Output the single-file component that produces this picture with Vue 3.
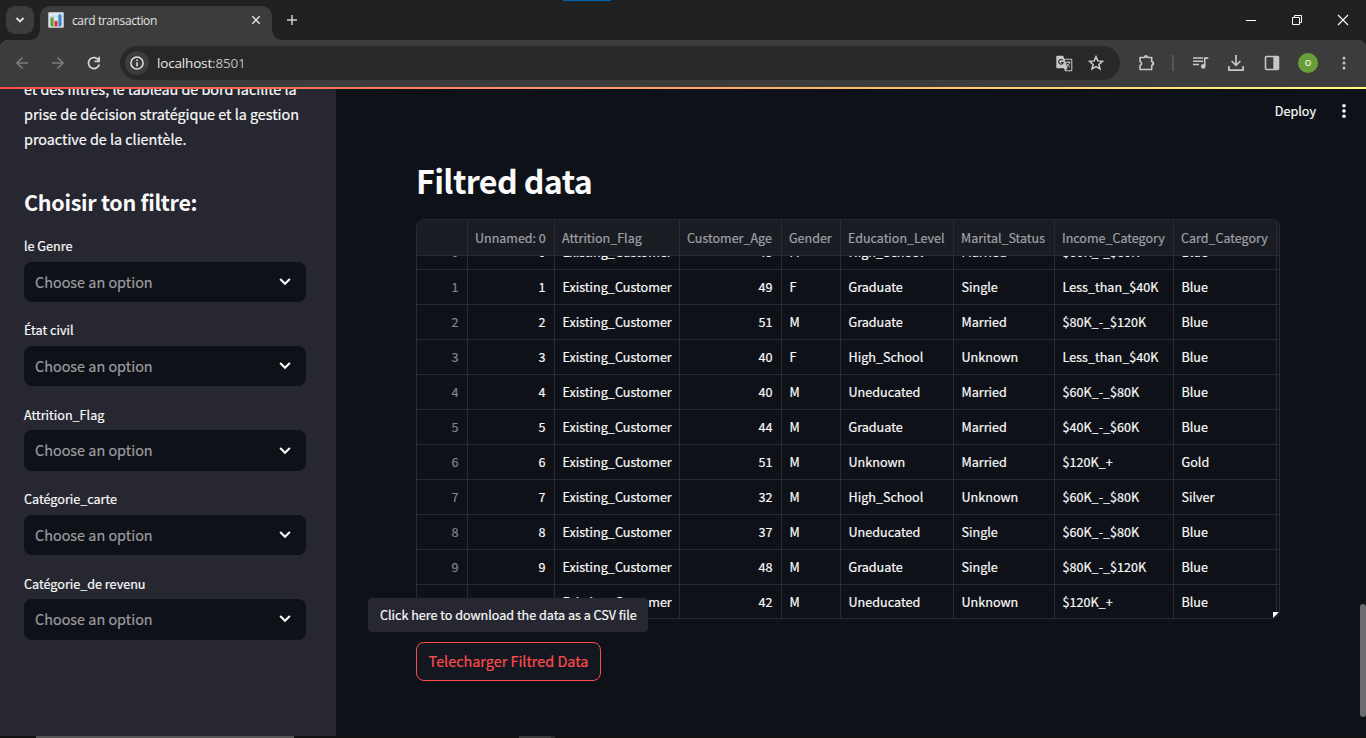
<script setup>
const filters = ['le Genre', 'État civil', 'Attrition_Flag', 'Catégorie_carte', 'Catégorie_de revenu']

const columns = [
  { name: '', num: true },
  { name: 'Unnamed: 0', num: true },
  { name: 'Attrition_Flag' },
  { name: 'Customer_Age', num: true },
  { name: 'Gender' },
  { name: 'Education_Level' },
  { name: 'Marital_Status' },
  { name: 'Income_Category' },
  { name: 'Card_Category' },
]

const customer = 'Existing_Customer'
const rows = [
  ['0', '0', customer, '45', 'M', 'High_School', 'Married', '$60K_-_$80K', 'Blue'],
  ['1', '1', customer, '49', 'F', 'Graduate', 'Single', 'Less_than_$40K', 'Blue'],
  ['2', '2', customer, '51', 'M', 'Graduate', 'Married', '$80K_-_$120K', 'Blue'],
  ['3', '3', customer, '40', 'F', 'High_School', 'Unknown', 'Less_than_$40K', 'Blue'],
  ['4', '4', customer, '40', 'M', 'Uneducated', 'Married', '$60K_-_$80K', 'Blue'],
  ['5', '5', customer, '44', 'M', 'Graduate', 'Married', '$40K_-_$60K', 'Blue'],
  ['6', '6', customer, '51', 'M', 'Unknown', 'Married', '$120K_+', 'Gold'],
  ['7', '7', customer, '32', 'M', 'High_School', 'Unknown', '$60K_-_$80K', 'Silver'],
  ['8', '8', customer, '37', 'M', 'Uneducated', 'Single', '$60K_-_$80K', 'Blue'],
  ['9', '9', customer, '48', 'M', 'Graduate', 'Single', '$80K_-_$120K', 'Blue'],
  ['10', '10', customer, '42', 'M', 'Uneducated', 'Unknown', '$120K_+', 'Blue'],
]
</script>

<template>
  <div class="window">
    <header class="titlebar">
      <button class="tab-search">
        <svg width="10" height="10" viewBox="0 0 10 10"><path d="M1.5 3 5 6.5 8.5 3" fill="none" stroke="#e3e3e3" stroke-width="1.8" /></svg>
      </button>
      <div class="tab">
        <svg class="favicon" width="16" height="16" viewBox="0 0 16 16">
          <rect x=".3" y=".3" width="15.4" height="15.4" rx="1" fill="#dfe9f0" />
          <path d="M1 4.5h14M1 8h14M1 11.500h14M5.500 1v14M10.500 1v14" stroke="#b7cddb" stroke-width=".6" />
          <rect x="2.500" y="5.500" width="3" height="9" fill="#5c9e31" />
          <rect x="6.500" y="9" width="3" height="5.500" fill="#dc2d45" />
          <rect x="10.500" y="2.500" width="3" height="12" fill="#3b88c3" />
        </svg>
        <span class="tab-title">card transaction</span>
        <svg class="tab-close" width="10" height="10" viewBox="0 0 10 10"><path d="m1.300 1.300 7.400 7.400m0-7.400-7.400 7.400" stroke="#e3e3e3" stroke-width="1.500" /></svg>
      </div>
      <svg class="new-tab" width="12" height="12" viewBox="0 0 12 12"><path d="M6 1v10M1 6h10" stroke="#d0d0d0" stroke-width="1.500" /></svg>
      <i class="snap"></i>
      <div class="controls">
        <svg width="46" height="40" viewBox="0 0 46 40"><path d="M18 20.500h10" stroke="#fff" /></svg>
        <svg width="46" height="40" viewBox="0 0 46 40"><path d="M18.500 17.500h7v7h-7zM20.500 17.500v-2h7v7h-2" fill="none" stroke="#fff" /></svg>
        <svg width="46" height="40" viewBox="0 0 46 40"><path d="m18 15 10 10m0-10L18 25" stroke="#fff" stroke-width="1.100" /></svg>
      </div>
    </header>

    <div class="toolbar">
      <svg class="nav" width="36" height="36" viewBox="0 0 36 36"><path d="M24 18H13m5.500-5.500L13 18l5.500 5.500" fill="none" stroke="#7c7c7c" stroke-width="1.600" /></svg>
      <svg class="nav" width="36" height="36" viewBox="0 0 36 36"><path d="M12 18h11m-5.500-5.500L23 18l-5.500 5.500" fill="none" stroke="#7c7c7c" stroke-width="1.600" /></svg>
      <svg class="nav" width="36" height="36" viewBox="0 0 36 36"><path d="M22.700 15.200a5.500 5.500 0 1 0 .6 4.300" fill="none" stroke="#d2d2d2" stroke-width="1.800" /><path d="M24 11.800v5.500h-5.500v-1.700h3.800v-3.800z" fill="#d2d2d2" /></svg>
      <div class="omnibox">
        <span class="site-info">
          <svg width="14" height="14" viewBox="0 0 14 14"><circle cx="7" cy="7" r="6.100" fill="none" stroke="#e3e3e3" stroke-width="1.500" /><path d="M7 6.300v4.200M7 3.500v1.600" stroke="#e3e3e3" stroke-width="1.500" /></svg>
        </span>
        <span class="url">localhost<span class="port">:8501</span></span>
        <svg class="translate" width="17" height="17" viewBox="0 0 17 17">
          <path d="M1.200.7h6l1 3h7.200q.9 0 .9.900v10.700q0 .9-.9.900H9l-1-3H1.200q-.9 0-.9-.9V1.600q0-.9.900-.9z" fill="#c7c7c7" />
          <path d="M8.700 4.700h6.600v10.500H9.700l1.900-2z" fill="#282828" />
          <path d="M6.800 5.400a2.300 2.300 0 1 0 .4 2.100H5" fill="none" stroke="#282828" stroke-width="1.100" />
          <path d="M9.200 7.200h5.500M12 6v1.200m1.900 0q-.7 2.600-3.700 4.800m.5-3.500q1 2.200 3.400 3.800" fill="none" stroke="#c7c7c7" stroke-width="1" />
        </svg>
        <svg class="star" width="16" height="16" viewBox="0 0 16 16"><path d="m8 1.700 1.800 4.200 4.700.4-3.600 3.100 1.100 4.600L8 11.600 4 14l1.100-4.600-3.600-3.100 4.700-.4z" fill="none" stroke="#cfcfcf" stroke-width="1.500" /></svg>
      </div>
      <svg class="puzzle" width="18" height="18" viewBox="0 0 18 18"><path d="M2 3.500h4.300a1.900 1.300 0 0 1 3.400 0h4v4.300a1.700 1.700 0 0 1 0 3.400v4.300H2v-3.900a2.200 2.200 0 0 0 0-4.200z" fill="none" stroke="#c7c7c7" stroke-width="1.600" stroke-linejoin="round" /><path d="M6 2.900a2 2 0 0 1 4 0zM14.200 7.500a2 2 0 0 1 0 4z" fill="#c7c7c7" /></svg>
      <i class="separator"></i>
      <svg class="media" width="17" height="16" viewBox="0 0 17 16"><path d="M1 3h10M1 6.200h10M1 9.400h6" stroke="#c7c7c7" stroke-width="1.500" /><path d="M12.700 11.200V3.100h3.600" fill="none" stroke="#c7c7c7" stroke-width="1.600" /><circle cx="11.200" cy="11.400" r="2.300" fill="#c7c7c7" /></svg>
      <svg class="download" width="16" height="16" viewBox="0 0 16 16"><path d="M8 0v10M3.600 6 8 10.400 12.400 6M.9 11v4.100h14.200V11" fill="none" stroke="#c7c7c7" stroke-width="1.700" /></svg>
      <svg class="panel" width="16" height="16" viewBox="0 0 16 16"><rect x="1.500" y="1.500" width="13" height="13" rx="1" fill="none" stroke="#c7c7c7" stroke-width="1.600" /><path d="M9.300 1.500h5.200v13H9.300z" fill="#c7c7c7" /></svg>
      <span class="avatar">o</span>
      <svg class="menu" width="4" height="16" viewBox="0 0 4 16"><circle cx="2" cy="3" r="1.500" fill="#c7c7c7" /><circle cx="2" cy="8" r="1.500" fill="#c7c7c7" /><circle cx="2" cy="13" r="1.500" fill="#c7c7c7" /></svg>
    </div>

    <div class="decoration"></div>

    <div class="page">
      <aside class="sidebar">
        <p class="intro">et des filtres, le tableau de bord facilite la<br />prise de décision stratégique et la gestion<br />proactive de la clientèle.</p>
        <h2>Choisir ton filtre:</h2>
        <div v-for="label in filters" :key="label" class="field">
          <label>{{ label }}</label>
          <div class="select">
            <span>Choose an option</span>
            <svg width="12" height="8" viewBox="0 0 12 8"><path d="M1.700 1.500 6 5.700l4.300-4.200" fill="none" stroke="#fafafa" stroke-width="2.100" stroke-linecap="round" /></svg>
          </div>
        </div>
      </aside>

      <main class="main">
        <nav class="actions">
          <span>Deploy</span>
          <svg width="4" height="16" viewBox="0 0 4 16"><circle cx="2" cy="2.700" r="1.800" fill="#fafafa" /><circle cx="2" cy="8" r="1.800" fill="#fafafa" /><circle cx="2" cy="13.300" r="1.800" fill="#fafafa" /></svg>
        </nav>
        <h1>Filtred data</h1>
        <div class="table">
          <div class="row head">
            <span v-for="c in columns" :key="c.name" class="cell">{{ c.name }}</span>
            <span></span>
          </div>
          <div class="body">
            <div v-for="row in rows" :key="row[0]" class="row">
              <span v-for="(value, i) in row" :key="i" class="cell" :class="{ num: columns[i].num, index: i === 0 }">{{ value }}</span>
              <span></span>
            </div>
          </div>
          <i class="resize"></i>
        </div>
        <div class="download-wrap">
          <button class="download-btn">Telecharger Filtred Data</button>
          <div class="tooltip">Click here to download the data as a CSV file</div>
        </div>
        <i class="scroll-thumb"></i>
      </main>
    </div>

    <footer class="edge"><i class="edge-a"></i><i class="edge-b"></i><i class="edge-c"></i></footer>
  </div>
</template>

<style>
body { margin: 0; background: #0e1117; overflow: hidden; }
</style>

<style scoped>
* { box-sizing: border-box; }
svg { display: block; flex: none; }
button { border: 0; padding: 0; font: inherit; }
.window { width: 1366px; height: 738px; display: flex; flex-direction: column; overflow: hidden; font-family: "Noto Sans CJK SC", "Noto Sans", sans-serif; color: #fafafa; }

.titlebar { height: 40px; flex: none; display: flex; background: #202221; position: relative; font-family: "Open Sans", "Noto Sans", sans-serif; }
.tab-search { width: 28px; height: 28px; margin: 6px 6px 0; border-radius: 9px; background: #3c3c3c; display: grid; place-items: center; }
.tab { width: 232px; height: 34px; margin-top: 6px; border-radius: 10px 10px 0 0; background: #3c3c3c; display: flex; align-items: center; padding: 0 11px 6px 8px; position: relative; }
.tab::before, .tab::after { content: ""; position: absolute; bottom: 0; width: 10px; height: 10px; }
.tab::before { left: -10px; background: radial-gradient(circle at 0 0, transparent 9.500px, #3c3c3c 10px); }
.tab::after { right: -10px; background: radial-gradient(circle at 100% 0, transparent 9.500px, #3c3c3c 10px); }
.tab-title { font-size: 12px; line-height: 16px; margin: 2px 0 0 8px; color: #e3e3e3; letter-spacing: -.38px; white-space: nowrap; }
.tab-close { margin-left: auto; }
.new-tab { margin: 14px 0 0 14px; }
.snap { position: absolute; left: 563px; top: 0; width: 48px; height: 1px; background: #0063b1; }
.controls { display: flex; margin-left: auto; }

.toolbar { height: 47px; flex: none; display: flex; align-items: center; background: #3c3c3c; padding: 0 0 1px 4px; font-family: "Open Sans", "Noto Sans", sans-serif; position: relative; }
.toolbar::before { content: ""; position: absolute; inset: 0; background: radial-gradient(circle at 8px 8px, transparent 8px, #202221 8.500px) 0 0 / 8px 8px no-repeat, radial-gradient(circle at 0 8px, transparent 8px, #202221 8.500px) 100% 0 / 8px 8px no-repeat; }
.omnibox { margin-left: 8px; width: 1000px; height: 34px; border-radius: 17px; background: #282828; display: flex; align-items: center; padding-left: 5px; }
.site-info { width: 24px; height: 24px; border-radius: 50%; background: #3c3c3c; display: grid; place-items: center; }
.url { margin-left: 8px; font-size: 13.500px; color: #e8e8e8; letter-spacing: -.17px; }
.port { color: #bdbdbd; }
.translate { margin-left: auto; }
.star { margin: 0 16px 0 15px; }
.puzzle { margin-left: 18px; }
.separator { width: 2px; height: 16px; margin-left: 16px; background: #565656; }
.media { margin-left: 18px; }
.download { margin-left: 19px; }
.panel { margin-left: 20px; }
.avatar { width: 20px; height: 20px; border-radius: 50%; margin-left: 18px; background: #689f38; color: #fff; font-size: 11px; line-height: 18px; text-align: center; }
.menu { margin-left: 24px; }

.decoration { height: 2px; flex: none; background: linear-gradient(90deg, #ff4b4b, #fffd80); }

.page { height: 647px; flex: none; display: flex; -webkit-text-stroke: .2px; }
.sidebar { width: 336px; flex: none; background: #262730; padding: 0 30px 0 24px; overflow: hidden; }
.intro { margin: -13px 0 0; font-size: 14.400px; line-height: 25.200px; letter-spacing: -.025px; white-space: nowrap; }
.sidebar h2 { margin: 35.600px 0 0; font-size: 21.500px; line-height: 29px; letter-spacing: -.3px; font-weight: 700; white-space: nowrap; -webkit-text-stroke: 0; }
.field { height: 84.400px; display: flex; flex-direction: column; }
.sidebar h2 + .field { margin-top: 19.900px; }
.field label { font-size: 12.600px; line-height: 20px; height: 25.600px; white-space: nowrap; }
.select { height: 40.400px; border-radius: 8px; background: #0e1117; display: flex; align-items: center; justify-content: space-between; padding: 0 15px 0 11px; font-size: 14.400px; color: #9b9c9f; }
.select span { padding-bottom: 1.500px; }

.main { flex: 1; background: #0e1117; padding: 10px 0 0 80px; position: relative; }
.actions { height: 24px; display: flex; align-items: center; justify-content: flex-end; gap: 26px; padding-right: 20px; font-size: 12.600px; }
.actions span { padding-bottom: 2px; }
.main h1 { margin: 33px 0 0; font-size: 32.200px; line-height: 48px; height: 63px; letter-spacing: -.62px; font-weight: 700; -webkit-text-stroke: 0; }
.table { width: 864px; height: 400px; border: 1px solid #292b31; border-radius: 8px; overflow: hidden; position: relative; font-size: 12.600px; }
.row { display: grid; grid-template-columns: 51px 87px 125px 102px 59px 113px 101px 119px 103px 1fr; height: 35px; border-bottom: 1px solid #292b31; }
.cell { border-right: 1px solid #292b31; padding: 0 8.500px 0 7.500px; line-height: 34px; white-space: nowrap; }
.head { height: 36px; background: #1a1c24; color: #a0a1a4; position: relative; z-index: 1; font-size: 12.500px; }
.head .cell { padding: 0 0 0 7px; line-height: 36px; }
.body { margin-top: -21px; }
.num { text-align: right; }
.index { color: #85878b; }
.resize { position: absolute; right: 0; bottom: 0; width: 6px; height: 6px; background: #fff; clip-path: polygon(0 0, 100% 0, 0 100%); }
.download-wrap { margin-top: 23px; width: 185px; position: relative; }
.download-btn { display: block; width: 185px; height: 39px; border: 1px solid #ff4b4b; border-radius: 8px; background: #131720; color: #ff4b4b; font-size: 14.400px; padding-bottom: 2px; white-space: nowrap; }
.tooltip { position: absolute; left: -48px; top: -44px; width: 280px; height: 34px; border-radius: 4px; background: #262730; font-size: 12.600px; line-height: 34px; letter-spacing: -.02px; padding-left: 12px; white-space: nowrap; }
.scroll-thumb { position: absolute; right: 0; top: 515px; width: 6px; height: 113px; border-radius: 3px; background: #6b6c70; }

.edge { height: 2px; flex: none; background: #121212; display: flex; }
.edge-a { width: 258px; margin-left: 36px; background: #555; }
.edge-b { width: 32px; margin-left: 225px; background: #3a3a3a; }
.edge-c { width: 4px; background: #2a2a2a; }
</style>
